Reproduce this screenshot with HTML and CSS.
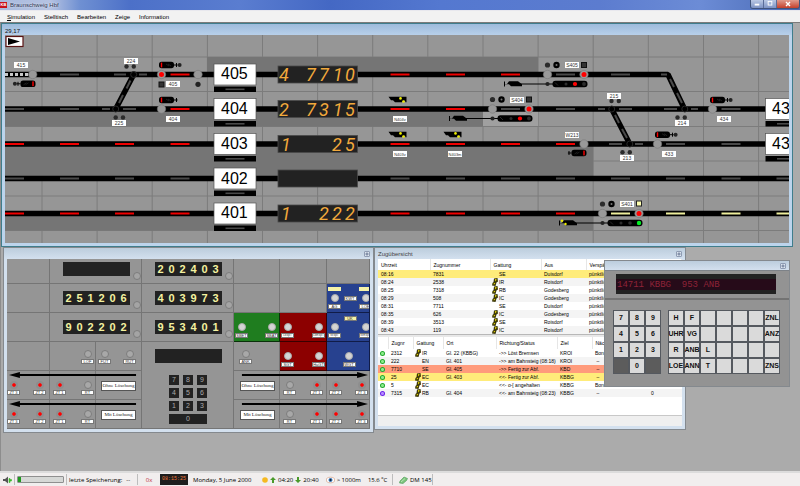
FILE: index.html
```html
<!DOCTYPE html>
<html lang="de">
<head>
<meta charset="utf-8">
<title>Braunschweig Hbf</title>
<link rel="stylesheet" href="styles.css">
</head>
<body>
<header class="titlebar">
  <span class="app-icon">KB</span>
  <span class="app-title">Braunschweig Hbf</span>
  <span class="win-controls">
    <button class="wc"><svg viewBox="0 0 13 8"><rect x="4" y="4" width="5" height="2" fill="#fff"/></svg></button>
    <button class="wc"><svg viewBox="0 0 13 8"><rect x="4.5" y="1.5" width="4" height="4" fill="none" stroke="#fff"/></svg></button>
    <button class="wc wc-close"><svg viewBox="0 0 22 8"><path d="M9 2l4 4M13 2l-4 4" stroke="#fff" stroke-width="1.4"/></svg></button>
  </span>
</header>
<nav class="menubar">
  <a href="#"><u>S</u>imulation</a><a href="#">Stelltisch</a><a href="#">Bearbeiten</a><a href="#">Zeige</a><a href="#">Information</a>
</nav>

<main class="desktop">
  <section class="win win-board">
    <div class="caption caption-active"><span class="coords">29,17</span></div>
    <svg class="board" viewBox="5 35 784 208">
      <defs>
        <g id="body"><rect x="0" y="-3.2" width="15" height="6.4" rx="2.6"/><path d="M15 0h3.6M17.5-2v4" stroke="#000" fill="none"/><path d="M9-1l3 2M7-1l3 2" stroke="#333" stroke-width=".6"/><rect x="1.8" y="-2.4" width="1.4" height="4.8" fill="#f00"/></g>
        <g id="shunt"><use href="#body"/><circle cx="20.6" cy="0" r="2" fill="#222"/></g>
        <g id="blob"><path d="M504-2.5h1v5h-1zM505 0h2l2-2.8h9l4 3v2h-11l-2-2h-4z"/></g>
        <g id="distant"><path d="M0-3h18v5.5h-1l-.5-1.5h-2l-1 1.5h-7l-2-2h-2z"/><circle cx="12" cy="-1.3" r="1.3" fill="#ee0"/><circle cx="15" cy="1.8" r="1.3" fill="#ee0"/></g>
        <g id="main">
          <circle cx="547.5" cy="65" r="2.6" fill="#2b2b2b"/><circle cx="556.5" cy="65" r="3.2"/><circle cx="556.5" cy="65" r="1" fill="#777"/>
          <circle cx="547.5" cy="74.5" r="4.2" class="lamp"/><circle cx="584" cy="74.5" r="4.2" class="lamp"/>
          <use href="#blob" y="84"/><path d="M520 84h33" stroke="#000" stroke-width="1"/>
          <circle cx="547.5" cy="84" r="2.1" fill="#222"/>
          <rect x="552.5" y="80.8" width="35" height="6.4" rx="3"/><path d="M555 82.5l3 3" stroke="#444" stroke-width=".6"/>
          <circle cx="566" cy="84" r="1.5" fill="#2c2c2c"/><circle cx="575" cy="84" r="1.8" fill="#2c2c2c"/><circle cx="584" cy="84" r="1.9" fill="#2c2c2c"/>
        </g>
        <g id="plate"><rect x="214" y="-10.5" width="42" height="21" fill="#fff" stroke="#555" stroke-width=".7"/><rect x="214" y="12" width="42" height="5.5"/><rect x="225.5" y="14" width="19" height="1.6" fill="#4a4a4a"/></g>
        <g id="pair"><circle cx="0" cy="0" r="2.2" fill="#2b2b2b"/><circle cx="7.3" cy="0" r="2.2" fill="#2b2b2b"/></g>
      </defs>

      <rect x="5" y="35" width="784" height="208" fill="#969696"/>
      <g class="gridlines">
        <path d="M5 57h784M5 91.5h784M5 126.5h784M5 161h784M5 196h784M5 230.5h784"/>
        <path d="M42 35v208M97.1 35v208M152.2 35v208M207.4 35v208M262.5 35v208M317.6 35v208M372.7 35v208M427.8 35v208M483 35v208M538.1 35v208M593.2 35v208M648.3 35v208M703.5 35v208M758.6 35v208"/>
      </g>
      <g class="occupied">
        <rect x="207" y="57" width="331" height="16"/><rect x="5" y="111" width="478" height="15.5"/>
        <rect x="5" y="146" width="588" height="32"/><rect x="5" y="215" width="588" height="15.5"/>
      </g>
      <rect x="483" y="111" width="55" height="15" fill="#a0a0a0"/>

      <g class="track">
        <path d="M5 74.5H668L684.5 109"/><path d="M5 109H768"/><path d="M5 144H768"/><path d="M5 178.5H789"/><path d="M5 213.5H789"/>
        <path d="M133.7 74.5L115.7 109M611.7 109L629.8 144"/>
      </g>
      <g class="seg off">
        <path d="M60 74.5h19M114 74.5h12M139 74.5h8M556 74.5h19M611 74.5h19M661 74.5h6"/>
        <path d="M5 109h19M60 109h19M102 109h8M123 109h13M501 109h19M556 109h19M598 109h7M619 109h13M664 109h13M691 109h7M721.5 109h19"/>
        <path d="M609 144h13M635 144h8M666 144h19M721.5 144h19"/>
        <path d="M5 178.5h19M60 178.5h19M115 178.5h19M170.5 178.5h19M390.5 178.5h19M446 178.5h19M501 178.5h19M556 178.5h19M611 178.5h19M666 178.5h19M721.5 178.5h19M776.5 178.5h13"/>
        <path d="M130.5 80.5l-4 8M123 95l-4 8M670 79l4 8M677 93l5 10M615 115l4 8M622 129l5 9"/>
      </g>
      <g class="seg red">
        <path d="M170.5 74.5h19M390.5 74.5h19M446 74.5h19M501 74.5h19M170.5 109h19M390.5 109h19M446 109h19"/>
        <path d="M5 144h19M60 144h19M115 144h19M170.5 144h19M390.5 144h19M446 144h19M501 144h19M556 144h19"/>
        <path d="M5 213.5h19M60 213.5h19M115 213.5h19M170.5 213.5h19M390.5 213.5h19M446 213.5h19M501 213.5h19M556 213.5h19"/>
      </g>
      <path class="seg route" d="M611 213.5h19M666 213.5h19M721.5 213.5h19M776.5 213.5h13"/>
      <path d="M5 74.5h24" stroke="#c8c8c8" stroke-width="3" stroke-dasharray="3 2"/>

      <use href="#plate" y="74.5"/><use href="#plate" y="109"/><use href="#plate" y="144"/><use href="#plate" y="178.5"/><use href="#plate" y="213.5"/>
      <use href="#plate" x="551.5" y="109"/><use href="#plate" x="551.5" y="144"/>
      <g class="num">
        <text x="221" y="79">405</text><text x="221" y="114">404</text><text x="221" y="149">403</text><text x="221" y="184">402</text><text x="221" y="218">401</text>
        <text x="772" y="114">43</text><text x="772" y="149">43</text>
      </g>

      <g fill="#222" stroke="#4a4a4a" stroke-width=".8">
        <rect x="278" y="66" width="79.5" height="17"/><rect x="278" y="100.5" width="79.5" height="17"/><rect x="278" y="135.5" width="79.5" height="17"/><rect x="278" y="170" width="79.5" height="17"/><rect x="278" y="205" width="79.5" height="17"/>
      </g>
      <g class="led">
        <text x="284" y="81">4</text><text x="311" y="81">7</text><text x="324" y="81">7</text><text x="338" y="81">1</text><text x="350" y="81">0</text>
        <text x="284" y="116">2</text><text x="311" y="116">7</text><text x="324" y="116">3</text><text x="338" y="116">1</text><text x="350" y="116">5</text>
        <text x="286" y="151">1</text><text x="337" y="151">2</text><text x="350" y="151">5</text>
        <text x="286" y="220">1</text><text x="324" y="220">2</text><text x="337" y="220">2</text><text x="350" y="220">2</text>
      </g>

      <use href="#main"/><use href="#main" x="-55" y="34.5"/><use href="#main" x="55" y="139"/>
      <circle cx="575" cy="84" r="2.1" fill="#f00"/><circle cx="520" cy="118.5" r="2.1" fill="#f00"/><circle cx="639" cy="223" r="2.2" fill="#0e2"/>
      <circle cx="562" cy="220.8" r="1.2" fill="#ee0"/><circle cx="565.5" cy="224" r="1.2" fill="#ee0"/>
      <g fill="#333" stroke="#111"><rect x="581.5" y="62.5" width="5" height="5"/><rect x="526.5" y="97" width="5" height="5"/><rect x="159" y="82" width="5" height="5"/></g>
      <rect x="636.5" y="201" width="5" height="5" fill="#ffffb0" stroke="#222"/>

      <g class="lamp"><circle cx="32.7" cy="74.5" r="4.2"/><circle cx="161.5" cy="74.5" r="4.2"/><circle cx="198" cy="74.5" r="4.2"/><circle cx="161.5" cy="109" r="4.2"/><circle cx="712.5" cy="109" r="4.2"/><circle cx="584" cy="144" r="4.2"/><circle cx="657.5" cy="144" r="4.2"/></g>
      <g fill="#f00"><circle cx="161.5" cy="74.5" r="2.5"/><circle cx="584" cy="74.5" r="2.5"/><circle cx="529" cy="109" r="2.5"/><circle cx="639" cy="213.5" r="2.5"/></g>
      <g fill="#000" stroke="#2a2a2a"><circle cx="133.7" cy="74.5" r="3"/><circle cx="115.7" cy="109" r="3"/><circle cx="611.7" cy="109" r="3"/><circle cx="684.8" cy="109" r="3"/><circle cx="629.8" cy="144" r="3"/></g>
      <circle cx="198" cy="84.3" r="2.6" fill="#222"/>
      <use href="#pair" x="126.5" y="66.5"/><use href="#pair" x="115.7" y="117.5"/><use href="#pair" x="611.5" y="101"/><use href="#pair" x="677.5" y="117.5"/><use href="#pair" x="622.5" y="152.3"/>

      <use href="#shunt" x="159" y="65"/><use href="#body" x="159" y="100"/><use href="#shunt" x="710" y="100"/><use href="#shunt" x="655" y="134.7"/>
      <use href="#shunt" transform="translate(35.5 83.8) scale(-1 1)"/><use href="#body" transform="translate(586.5 153) scale(-1 1)"/>
      <use href="#distant" x="388.5" y="99.7"/><use href="#distant" x="388.5" y="134.7"/><use href="#distant" x="443.5" y="134.7"/>

      <g fill="#fff">
        <rect x="14" y="62" width="14" height="6"/><rect x="124" y="58" width="14" height="6"/><rect x="112" y="120" width="14" height="6"/><rect x="166" y="81" width="14" height="6"/><rect x="166" y="116" width="14" height="6"/>
        <rect x="565" y="62" width="14" height="6"/><rect x="510" y="97" width="14" height="6"/><rect x="620" y="201" width="14" height="6"/><rect x="607" y="93" width="14" height="6"/><rect x="675" y="120" width="14" height="6"/>
        <rect x="717" y="116" width="14" height="6"/><rect x="662" y="151" width="14" height="6"/><rect x="620" y="155" width="14" height="6"/><rect x="565" y="132" width="14" height="6"/>
        <rect x="393" y="116" width="14" height="6"/><rect x="393" y="151" width="14" height="6"/><rect x="448" y="151" width="14" height="6"/>
      </g>
      <g class="tag">
        <text x="21" y="67">415</text><text x="131" y="63">224</text><text x="119" y="125">225</text><text x="173" y="86">405</text><text x="173" y="121">404</text>
        <text x="572" y="67">S405</text><text x="517" y="102">S404</text><text x="627" y="206">S401</text><text x="614" y="98">215</text><text x="682" y="125">214</text>
        <text x="724" y="121">434</text><text x="669" y="156">433</text><text x="627" y="160">213</text><text x="572" y="137">W213</text>
      </g>
      <g class="tag small"><text x="400" y="121">N404v</text><text x="400" y="156">N403v</text><text x="455" y="156">N403m</text></g>
      <rect x="6" y="36.5" width="17" height="10" fill="#fff" stroke="#5a1414" stroke-width="1.2"/><path d="M8 38l12 3.5-12 3.5z"/>
    </svg>
  </section>

  <section class="win win-panel">
    <div class="caption"><button class="close"></button></div>
    <div class="panel">
      <div class="tile"></div>
      <div class="tile read"><output class="digits"></output><button class="ack"></button></div>
      <div class="tile read"><output class="digits"><span>2</span><span>0</span><span>2</span><span>4</span><span>0</span><span>3</span></output><button class="ack"></button></div>
      <div class="tile"></div><div class="tile"></div><div class="tile"></div>

      <div class="tile"></div>
      <div class="tile read"><output class="digits"><span>2</span><span>5</span><span>1</span><span>2</span><span>0</span><span>6</span></output><button class="ack"></button></div>
      <div class="tile read"><output class="digits"><span>4</span><span>0</span><span>3</span><span>9</span><span>7</span><span>3</span></output><button class="ack"></button></div>
      <div class="tile"></div><div class="tile"></div>
      <div class="tile blue">
        <div class="bars"><i></i><i></i></div>
        <div class="pairkeys"><button class="key"><i></i><b>AG</b></button><b class="mid">KWT</b><button class="key"><i></i><b>LOE</b></button></div>
      </div>

      <div class="tile"></div>
      <div class="tile read"><output class="digits"><span>9</span><span>0</span><span>2</span><span>2</span><span>0</span><span>2</span></output><button class="ack"></button></div>
      <div class="tile read"><output class="digits"><span>9</span><span>5</span><span>3</span><span>4</span><span>0</span><span>1</span></output><button class="ack"></button></div>
      <div class="tile green pairkeys"><button class="key"><i></i><b>SBET</b></button><button class="key"><i></i><b>SBAT</b></button></div>
      <div class="tile red-tile pairkeys"><button class="key long"><i></i><b>LxSpT</b></button><button class="key long"><i></i><b>LxESpT</b></button></div>
      <div class="tile blue">
        <div class="bars one"><b>UK</b></div>
        <div class="pairkeys"><button class="key long"><i></i><b>WSpT</b></button><button class="key long"><i></i><b>WESpT</b></button></div>
      </div>

      <div class="span2">
        <div class="tile"></div>
        <div class="tile keys-end"><button class="key dim"><i></i><b>LOF</b></button></div>
        <div class="tile keys-two"><button class="key dim"><i></i><b>FUT</b></button><button class="key dim"><i></i><b>RUT</b></button></div>
      </div>
      <div class="tile console">
        <output class="digits"></output>
        <div class="numpad">
          <button>7</button><button>8</button><button>9</button><button>4</button><button>5</button><button>6</button><button>1</button><button>2</button><button>3</button><button class="wide">0</button>
        </div>
      </div>
      <div class="tile keys-start"><button class="key dim"><i></i><b>ANK</b></button></div>
      <div class="tile red-tile pairkeys"><button class="key"><i></i><b>SGT</b></button><button class="key"><i></i><b>HaGT</b></button></div>
      <div class="tile blue pairkeys center"><button class="key"><i></i><b>WGT</b></button></div>

      <div class="tile strip west">
        <svg viewBox="0 0 135 8"><path d="M2 4l11-3v2h117v2H13v2z"/></svg>
        <div class="strip-keys"><button class="key on"><i></i><b>ZT 3</b></button><button class="key on"><i></i><b>ZT 2</b></button><button class="key on"><i></i><b>ZT 1</b></button><button class="key dim"><i></i><b>RT</b></button><button class="mode">Ohne Löschung</button></div>
      </div>
      <div class="tile strip east">
        <svg viewBox="0 0 136 8"><path d="M135 4l-11-3v2H8v2h116v2z"/></svg>
        <div class="strip-keys"><button class="mode">Ohne Löschung</button><button class="key dim"><i></i><b>RT</b></button><button class="key on"><i></i><b>ZT 1</b></button><button class="key on"><i></i><b>ZT 2</b></button><button class="key on"><i></i><b>ZT 3</b></button></div>
      </div>
      <div class="tile strip west">
        <svg viewBox="0 0 135 8"><path d="M2 4l11-3v2h117v2H13v2z"/></svg>
        <div class="strip-keys"><button class="key on"><i></i><b>ZT 3</b></button><button class="key on"><i></i><b>ZT 2</b></button><button class="key on"><i></i><b>ZT 1</b></button><button class="key dim"><i></i><b>RT</b></button><button class="mode">Mit Löschung</button></div>
      </div>
      <div class="tile strip east">
        <svg viewBox="0 0 136 8"><path d="M135 4l-11-3v2H8v2h116v2z"/></svg>
        <div class="strip-keys"><button class="mode">Mit Löschung</button><button class="key dim"><i></i><b>RT</b></button><button class="key on"><i></i><b>ZT 1</b></button><button class="key on"><i></i><b>ZT 2</b></button><button class="key on"><i></i><b>ZT 3</b></button></div>
      </div>
    </div>
  </section>

  <section class="win win-trains">
    <div class="caption"><span>Zugübersicht</span><button class="close"></button></div>
    <svg class="sprites"><defs><symbol id="loco" viewBox="0 0 6 8"><path d="M2 .5l3.500-.5.5 3.500-1.500 1L3.500 8 0 7.500l.5-2.500 1-1z" fill="#3c3708"/><path d="M3 1l1.800.5-1.500 2zM1.800 4.800l1.500.5-1.500 1.500z" fill="#f2e000"/></symbol></defs></svg>
    <div class="trains">
      <table class="arrivals">
        <colgroup><col class="a1"><col class="a2"><col class="a3"><col class="a4"><col class="a5"></colgroup>
        <thead><tr><th>Uhrzeit</th><th>Zugnummer</th><th>Gattung</th><th>Aus</th><th>Verspätung</th></tr></thead>
        <tbody>
          <tr class="yellow"><td>08:16</td><td>7831</td><td>SE</td><td>Duisdorf</td><td>pünktlich</td></tr>
          <tr><td>08:24</td><td>2538</td><td><svg class="loco"><use href="#loco"/></svg>IR</td><td>Roisdorf</td><td>pünktlich</td></tr>
          <tr><td>08:25</td><td>7318</td><td><svg class="loco"><use href="#loco"/></svg>RB</td><td>Godesberg</td><td>pünktlich</td></tr>
          <tr><td>08:29</td><td>508</td><td><svg class="loco"><use href="#loco"/></svg>IC</td><td>Godesberg</td><td>pünktlich</td></tr>
          <tr><td>08:31</td><td>7711</td><td>SE</td><td>Duisdorf</td><td>pünktlich</td></tr>
          <tr><td>08:35</td><td>626</td><td><svg class="loco"><use href="#loco"/></svg>IC</td><td>Godesberg</td><td>pünktlich</td></tr>
          <tr><td>08:39</td><td>3513</td><td><svg class="loco"><use href="#loco"/></svg>SE</td><td>Roisdorf</td><td>pünktlich</td></tr>
          <tr><td>08:43</td><td>119</td><td><svg class="loco"><use href="#loco"/></svg>IC</td><td>Roisdorf</td><td>pünktlich</td></tr>
        </tbody>
      </table>
      <div class="splitter"></div>
      <table class="current">
        <colgroup><col class="b0"><col class="b1"><col class="b2"><col class="b3"><col class="b4"><col class="b5"><col class="b6"><col class="b7"></colgroup>
        <thead><tr><th></th><th>Zugnr</th><th>Gattung</th><th>Ort</th><th>Richtung/Status</th><th>Ziel</th><th>Nächster</th><th></th></tr></thead>
        <tbody>
          <tr><td><i class="dot"></i></td><td>2312</td><td><svg class="loco"><use href="#loco"/></svg>IR</td><td>Gl. 22 (KBBG)</td><td>-&gt;&gt; Löst Bremsen</td><td>KROI</td><td>Bonn</td><td></td></tr>
          <tr><td><i class="dot"></i></td><td>222</td><td>EN</td><td>Gl. 401</td><td>-&gt;&gt; am Bahnsteig (08:18)</td><td>KROI</td><td>&nbsp;–</td><td></td></tr>
          <tr class="alert"><td><i class="dot"></i></td><td>7710</td><td>SE</td><td>Gl. 405</td><td>-&gt;&gt; Fertig zur Abf.</td><td>KBD</td><td>&nbsp;–</td><td></td></tr>
          <tr class="yellow"><td><i class="dot"></i></td><td>25</td><td><svg class="loco"><use href="#loco"/></svg>EC</td><td>Gl. 403</td><td>&lt;&lt;- Fertig zur Abf.</td><td>KBBG</td><td>&nbsp;–</td><td></td></tr>
          <tr><td><i class="dot"></i></td><td>5</td><td><svg class="loco"><use href="#loco"/></svg>EC</td><td></td><td>&lt;&lt;- o-[ angehalten</td><td>KBBG</td><td>Bonn</td><td></td></tr>
          <tr><td><i class="dot violet"></i></td><td>7315</td><td><svg class="loco"><use href="#loco"/></svg>RB</td><td>Gl. 404</td><td>&lt;&lt;- am Bahnsteig (08:23)</td><td>KBBG</td><td>&nbsp;–</td><td>0</td></tr>
        </tbody>
      </table>
      <div class="trains-foot"></div>
    </div>
  </section>

  <section class="win win-keypad">
    <div class="caption"><button class="close"></button></div>
    <div class="lcd-wrap"><output class="lcd">14711 KBBG&nbsp; 953 ANB</output></div>
    <div class="pads">
      <div class="pad pad-num">
        <button>7</button><button>8</button><button>9</button><button>4</button><button>5</button><button>6</button><button>1</button><button>2</button><button>3</button><button class="blank"></button><button>0</button><button class="blank"></button>
      </div>
      <div class="pad pad-fn">
        <button>H</button><button>F</button><button></button><button></button><button></button><button></button><button>ZNL</button>
        <button>UHR</button><button>VG</button><button></button><button></button><button></button><button></button><button>ANZ</button>
        <button>R</button><button>ANB</button><button>L</button><button></button><button></button><button></button><button></button>
        <button>LOE</button><button>ANN</button><button>T</button><button></button><button></button><button></button><button>ZNS</button>
      </div>
    </div>
  </section>
</main>

<footer class="status">
  <span class="cell c-sound"><svg class="ic9" viewBox="0 0 9 8"><path d="M0 3h2l3-2.500v7L2 5H0z" fill="#555"/><path d="M6 2.500h1v1h1.500v1.500H7v1.500H6z" fill="#3dbb2d" stroke="#3dbb2d" stroke-width=".6"/></svg></span>
  <span class="cell c-meter"><span class="meter"><i></i></span></span>
  <span class="cell c-save"><span>letzte Speicherung:</span><span>--</span></span>
  <span class="cell c-speed">0x</span>
  <time class="clock">08:15:25</time>
  <span class="date">Monday, 5 June 2000</span>
  <span class="cell c-weather">
    <svg class="ic6" viewBox="0 0 6 8"><circle cx="3" cy="4" r="2.8" fill="#f5b921"/></svg>
    <svg class="ic6" viewBox="0 0 6 8"><path d="M3 1l3 3H4v3H2V4H0z" fill="#4a9a2a"/></svg><span>04:20</span>
    <svg class="ic6" viewBox="0 0 6 8"><path d="M3 7l3-3H4V1H2v3H0z" fill="#4a9a2a"/></svg><span>20:40</span>
    <svg class="ic9 eye" viewBox="0 0 9 8"><ellipse cx="4.5" cy="4" rx="4.2" ry="2.8" fill="#fff" stroke="#d8a890" stroke-width=".8"/><circle cx="4.5" cy="4" r="2" fill="#3a78b8"/><circle cx="4.5" cy="4" r=".9" fill="#123"/></svg><span>&gt; 1000m</span>
    <span class="temp">15.6 ºC</span>
  </span>
  <span class="cell c-money"><svg class="ic9" viewBox="0 0 9 8"><path d="M1 5l4-4 3.500 1.500-1 2L4 7.500.5 7z" fill="#7cc47c" stroke="#4f9a58" stroke-width=".6"/><path d="M2 6l4-3.500" stroke="#d0f0d0" stroke-width=".7"/></svg><span>DM 145</span></span>
</footer>
</body>
</html>
```
FILE: styles.css
```css
* { box-sizing: border-box; }
html, body { height: 100%; margin: 0; }
body { display: flex; flex-direction: column; overflow: hidden; font: 6px/8px "Liberation Sans", sans-serif; color: #111; background: #ababab; }
button { font: inherit; color: inherit; padding: 0; margin: 0; border: 0; background: none; }
svg { display: block; }

/* main window */
.titlebar { flex: none; display: flex; align-items: center; height: 11px; border-bottom: 1px solid #e8e8ee; background: linear-gradient(90deg, #a9bbdd 0, #b5c2e2 50px, #6f90d2 80px, #4c70c8 130px, #5a7dd0 240px, #4468c4 330px, #5478d0 440px, #5c7ccf 600px, #6c8cd6 700px, #4869b4 100%); }
.app-icon { width: 7px; height: 6px; background: #c8141c; color: #fff; font: bold 4px/6px "Liberation Sans", sans-serif; text-align: center; }
.app-title { margin-left: 3px; color: #2a3350; text-shadow: 0 0 2px #fff; }
.win-controls { display: flex; align-self: flex-start; margin-left: auto; border: 1px solid #40547c; border-top: 0; border-radius: 0 0 3px 3px; overflow: hidden; }
.wc { width: 13px; height: 8px; background: linear-gradient(#b9c8e4, #7d93c4); border-right: 1px solid #5a6c98; }
.wc-close { width: 22px; border: 0; background: linear-gradient(#e09a8c, #c4402c); }
.menubar { flex: none; display: flex; gap: 9px; align-items: center; height: 11px; padding: 0 7px; background: #f2f2f2; }
.menubar a { color: #000; text-decoration: none; }
.desktop { flex: 1; position: relative; overflow: hidden; background: #ababab; border-top: 1px solid #7b7b7b; border-left: 1px solid #8d8d8d; }

/* child windows */
.win { position: absolute; border: 1px solid #84898e; background: #d3e0ee; padding: 0 3px 3px; }
.caption { display: flex; align-items: center; justify-content: space-between; height: 11px; margin: 0 -3px; padding: 0 3px; color: #444; background: linear-gradient(#bccddd, #d3e0ee); }
.caption-active { background: linear-gradient(#9dbbdc, #b8d0ea); color: #111; }
.coords { align-self: flex-end; }
.close { width: 6px; height: 6px; margin-left: auto; border: 1px solid #8f9cb3; border-radius: 1px; background: radial-gradient(#8592aa 1px, #dde6f0 2px); }
.win-board { left: 0; right: 7px; top: 0; border-color: #3f7d8c; background: #bcd4ec; }
.win-panel { left: 2px; top: 224px; width: 371px; }
.win-trains { left: 373px; top: 224px; width: 312px; }
.win-keypad { left: 603px; top: 237px; width: 186px; padding: 0; background: #939393; }

/* track diagram */
.board { width: 100%; height: auto; }
.gridlines path { stroke: #7c7c7c; fill: none; stroke-width: 1; }
.occupied rect { fill: #757575; }
.track path { fill: none; stroke: #000; stroke-width: 5.5; stroke-linejoin: bevel; }
.seg, .seg path { fill: none; stroke-width: 2; }
.off { stroke: #4a4a4a; }
.red { stroke: #f00000; }
.route { stroke: #eeee9c; }
.lamp { fill: #999; stroke: #777; stroke-width: .6; }
.num text { font: 16px "Liberation Sans", sans-serif; }
.led text { font: italic 400 18px Roboto, "Liberation Sans", sans-serif; fill: #f2a93c; text-anchor: middle; }
.tag text { font: 5px "Liberation Sans", sans-serif; fill: #333; text-anchor: middle; }
.small text { font-size: 4px; }

/* control panel */
.panel { display: grid; grid-template-columns: 43px 92px 92px 46px 47px 43px; grid-template-rows: 25px repeat(5, 29px); background: #959595; overflow: hidden; }
.tile { overflow: hidden; border-right: 1px solid #757575; border-bottom: 1px solid #757575; min-width: 0; }
.read { display: flex; align-items: flex-end; gap: 3px; padding: 0 0 3px 13px; }
.digits { display: grid; grid-template-columns: repeat(6, 11px); width: 67px; height: 14px; margin-bottom: 4px; background: #222; color: #f4f2a0; font: bold 11px/14px "Liberation Sans", sans-serif; text-align: center; }
.ack { width: 8px; height: 8px; border-radius: 50%; background: #a4a4a4; border: 1px solid #7c7c7c; }
.green { background: #1f7d1f; border-color: #0a300a; }
.red-tile { background: #8c0000; border-color: #3a0000; }
.blue { background: #27418f; border-color: #101c48; }
.key { display: flex; flex-direction: column; align-items: center; gap: 2px; width: 13px; flex: none; }
.key i { width: 8px; height: 8px; border-radius: 50%; background: #d4d4d4; border: 1px solid #aaa; }
.key b, .mid, .bars b { display: block; width: 13px; height: 5px; border: 1px solid #777; background: #fff; color: #333; font: 4px/3px "Liberation Sans", sans-serif; text-align: center; overflow: hidden; white-space: nowrap; }
.long b { font-size: 3px; }
.dim, .on { gap: 1px; }
.key.dim i { background: #a8a8a8; border-color: #7c7c7c; }
.key.on i { background: #f00 padding-box; border: 2px solid #8e8e8e; }
.tile.pairkeys { display: flex; justify-content: space-between; align-items: flex-start; padding: 10px 1px 0; }
.tile.center { justify-content: center; padding-left: 3px; }
.blue .pairkeys { display: flex; width: 46px; justify-content: space-between; padding: 0 1px; }
.bars { display: flex; justify-content: space-between; width: 46px; height: 10px; padding: 3px 1px 0; }
.bars i { width: 13px; height: 4px; background: #f6f2a8; }
.bars.one { justify-content: center; }
.bars b { background: #f6f2a8; }
.mid { margin-top: 2px; }
.span2 { grid-column: 1 / 3; display: grid; grid-template-columns: 43px 46px 46px; }
.keys-end, .keys-two, .keys-start { display: flex; align-items: flex-start; padding: 8px 2px 0; }
.keys-end { justify-content: flex-end; padding-right: 1px; }
.keys-two { justify-content: space-between; padding-right: 5px; }
.keys-start { padding-left: 5px; }
.console { grid-row: 4 / 7; grid-column: 3; display: flex; flex-direction: column; align-items: flex-start; padding: 7px 0 0 13px; }
.console .digits { margin: 0; }
.numpad { display: grid; grid-template-columns: repeat(3, 10px); gap: 3px 4px; margin: 12px 0 0 14px; }
.numpad button { height: 10px; background: #222; color: #aaa; font: 7px/10px "Liberation Sans", sans-serif; }
.numpad .wide { grid-column: 1 / 4; }
.strip svg { width: 100%; height: 8px; }
.strip-keys { display: grid; align-items: start; margin-top: 2px; }
.west { grid-column: 1 / 3; background: linear-gradient(#777, #777) 42px 0 / 1px 100% no-repeat, linear-gradient(#777, #777) 88px 0 / 1px 100% no-repeat; }
.east { grid-column: 4 / 7; background: linear-gradient(#777, #777) 45px 0 / 1px 100% no-repeat, linear-gradient(#777, #777) 92px 0 / 1px 100% no-repeat; }
.west .strip-keys { grid-template-columns: 12px 14px 13px 7px 13px 15px 13px 7px 35px; }
.west .strip-keys > :nth-child(2) { grid-column: 3; }
.west .strip-keys > :nth-child(3) { grid-column: 5; }
.west .strip-keys > :nth-child(4) { grid-column: 7; }
.west .strip-keys > :nth-child(5) { grid-column: 9; }
.east .strip-keys { grid-template-columns: 6px 35px 8px 13px 14px 13px 6px 13px 13px 13px; }
.east .strip-keys > :nth-child(1) { grid-column: 2; }
.east .strip-keys > :nth-child(2) { grid-column: 4; }
.east .strip-keys > :nth-child(3) { grid-column: 6; }
.east .strip-keys > :nth-child(4) { grid-column: 8; }
.east .strip-keys > :nth-child(5) { grid-column: 10; }
.mode { height: 10px; border: 1px solid #555; background: #fff; font: 5px/8px "Liberation Serif", serif; white-space: nowrap; overflow: hidden; color: #222; }

/* train overview */
.sprites { width: 0; height: 0; position: absolute; }
.trains { background: #fff; overflow: hidden; }
table { width: 100%; table-layout: fixed; border-collapse: collapse; font: 5px/8px "Liberation Sans", sans-serif; color: #000; }
th { height: 11px; padding: 0 0 0 3px; font-weight: normal; text-align: left; white-space: nowrap; border-right: 1px solid #e6e6e6; overflow: hidden; }
.current th { height: 12px; }
td { height: 8px; padding: 0 0 0 3px; white-space: nowrap; overflow: hidden; }
tbody tr:nth-child(even) { background: #f4f4f4; }
tbody tr.yellow { background: #ffec7a; }
tbody tr.alert { background: #ff9b7c; }
.a1 { width: 52px; } .a2 { width: 60px; } .a3 { width: 51px; } .a4 { width: 45px; }
.b0 { width: 10px; } .b1 { width: 25px; } .b2 { width: 30px; } .b3 { width: 53px; } .b4 { width: 61px; } .b5 { width: 35px; } .b6 { width: 56px; }
td:nth-child(3) { padding-left: 9px; }
.loco { float: left; width: 6px; height: 8px; margin-left: -7px; }
.dot { display: block; width: 5px; height: 5px; margin-left: -1px; border-radius: 50%; background: radial-gradient(#8bea8b 1px, #20a82a 2px); }
.dot.violet { background: radial-gradient(#b48bff 1px, #6a1ee8 2px); }
.splitter { height: 3px; background: #e8e8e8; border-top: 1px solid #b8b8b8; }
.trains-foot { height: 29px; background: linear-gradient(#fff 18px, #c8c8c8 18px, #c8c8c8 19px, #efefef 19px); }

/* input terminal */
.win-keypad .caption { height: 10px; margin: 0; border-bottom: 1px solid #7d8288; }
.lcd-wrap { padding: 3px 13px 4px 11px; border-bottom: 2px solid #737373; }
.lcd { display: block; background: linear-gradient(#222 5px, #260b19 5px, #260b19 16px, #222 16px); height: 20px; padding: 0 1px; color: #8e2338; font: 9px/22px "Liberation Mono", monospace; white-space: nowrap; }
.pads { display: flex; gap: 7px; padding: 10px 8px 12px; }
.pad { display: grid; grid-auto-rows: 16px; }
.pad-num { grid-template-columns: repeat(3, 16px); }
.pad-fn { grid-template-columns: repeat(7, 16px); }
.pad button { display: flex; justify-content: center; align-items: center; border: 1px solid #55595f; background: #dadada; font: bold 7px/12px "Liberation Sans", sans-serif; white-space: nowrap; }
.pad .blank { background: #5c5c5c; }

/* status bar */
.status { flex: none; display: flex; align-items: center; height: 15px; border-top: 2px solid #dcdcdc; background: #f1eeee; color: #000; font: 6px/10px "Open Sans", "Noto Sans", sans-serif; }
.cell { display: flex; align-items: center; height: 11px; border-right: 1px solid #bdbdbd; }
.ic6 { width: 6px; height: 8px; }
.ic9 { width: 9px; height: 8px; }
.c-sound { width: 15px; padding-left: 3px; }
.c-meter { width: 52px; padding-left: 2px; }
.meter { width: 47px; height: 7px; border: 1px solid #8f8f8f; border-radius: 1px; background: #d6d8d6; }
.meter i { display: block; width: 3px; height: 5px; background: #1f9a1f; }
.c-save { width: 71px; padding-left: 2px; gap: 4px; }
.c-speed { width: 22px; justify-content: center; border: 0; color: #c03038; }
.clock { width: 28px; height: 11px; background: #1e1e1e; color: #f07838; font: 5px/11px "Liberation Mono", monospace; text-align: center; }
.date { width: 74px; padding-left: 5px; }
.c-weather { gap: 2px; width: 131px; }
.eye { margin-left: 5px; }
.temp { margin-left: 5px; }
.c-money { width: 40px; padding-left: 6px; gap: 2px; }
```
